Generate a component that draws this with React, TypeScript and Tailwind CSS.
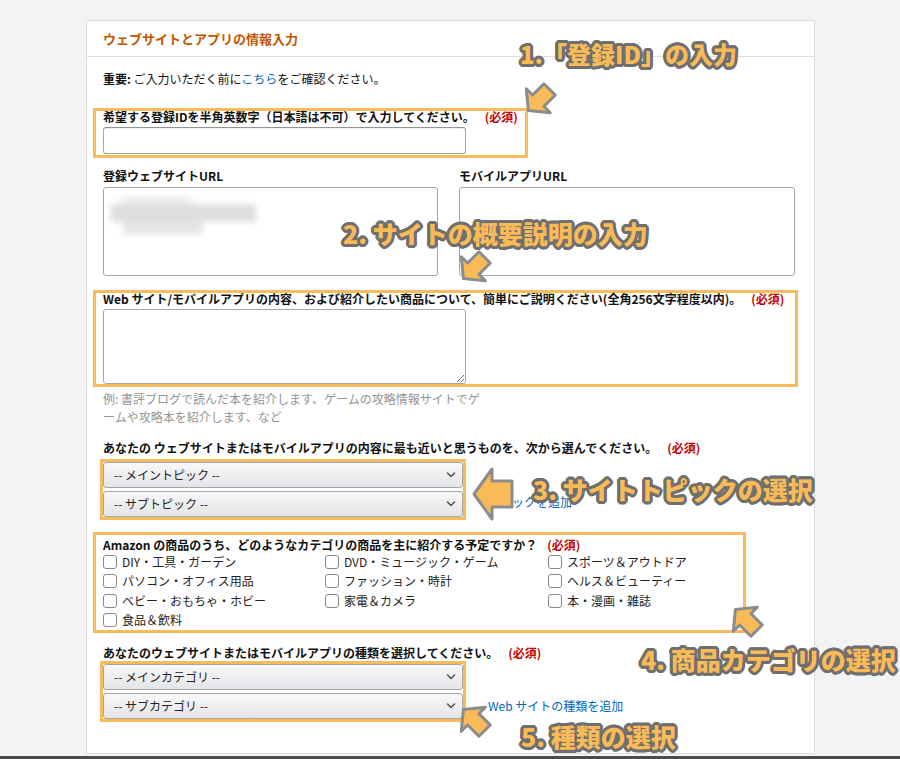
import React from "react";

// Outline used by the big orange annotation labels
const outline =
  "[text-shadow:3px_0_0_#6f6f6f,2.8px_1.1px_0_#6f6f6f,2.1px_2.1px_0_#6f6f6f,1.1px_2.8px_0_#6f6f6f,0_3px_0_#6f6f6f,-1.1px_2.8px_0_#6f6f6f,-2.1px_2.1px_0_#6f6f6f,-2.8px_1.1px_0_#6f6f6f,-3px_0_0_#6f6f6f,-2.8px_-1.1px_0_#6f6f6f,-2.1px_-2.1px_0_#6f6f6f,-1.1px_-2.8px_0_#6f6f6f,0_-3px_0_#6f6f6f,1.1px_-2.8px_0_#6f6f6f,2.1px_-2.1px_0_#6f6f6f,2.8px_-1.1px_0_#6f6f6f]";

function Req() {
  return <span className="ml-[10px] font-bold text-[#c40000]">(必須)</span>;
}

function SelectBox({ label }: { label: string }) {
  return (
    <div className="flex h-[26px] items-center justify-between rounded-[3px] border border-[#a6a6a6] bg-linear-to-b from-[#f8f8f9] to-[#e4e5e8] pl-[10px] pr-[6px] text-[12px] text-[#222]">
      <span>{label}</span>
      <svg width="10" height="8" viewBox="0 0 10 8" fill="none">
        <polyline points="1.5,2 5,5.5 8.5,2" stroke="#555" strokeWidth="1.6" strokeLinecap="round" strokeLinejoin="round" />
      </svg>
    </div>
  );
}

function Check({ label }: { label: string }) {
  return (
    <div className="flex h-[19.5px] items-center gap-[5px]">
      <span className="h-[14px] w-[14px] rounded-[3px] border border-[#8a8a8a] bg-white" />
      <span className="text-[12px] text-[#222]">{label}</span>
    </div>
  );
}

// Orange block arrow pointing left, rotated by the caller
function Arrow({ small }: { small?: boolean }) {
  return small ? (
    <svg width="34" height="40" viewBox="0 0 34 40">
      <polygon points="2,20 16,3 16,12 32,12 32,28 16,28 16,37" fill="#f9bb57" stroke="#8c8c8c" strokeWidth="3" strokeLinejoin="round" />
    </svg>
  ) : (
    <svg width="42" height="54" viewBox="0 0 42 54">
      <polygon points="2,27 20,2 20,14 40,14 40,40 20,40 20,52" fill="#f9bb57" stroke="#8c8c8c" strokeWidth="3" strokeLinejoin="round" />
    </svg>
  );
}

export default function App() {
  const categories = [
    "DIY・工具・ガーデン",
    "DVD・ミュージック・ゲーム",
    "スポーツ＆アウトドア",
    "パソコン・オフィス用品",
    "ファッション・時計",
    "ヘルス＆ビューティー",
    "ベビー・おもちゃ・ホビー",
    "家電＆カメラ",
    "本・漫画・雑誌",
    "食品＆飲料",
  ];

  return (
    <div className="relative flex h-[759px] w-[900px] flex-col overflow-hidden bg-[#f3f3f3] font-['Noto_Sans_CJK_JP',sans-serif] text-[#111]">
      {/* Form card */}
      <div className="ml-[86px] mt-[20px] h-[734px] w-[729px] border border-[#dddddd] bg-white">
        <div className="flex h-[36px] items-center border-b border-[#dddddd] px-[16px] text-[13px] font-bold text-[#c45500]">
          ウェブサイトとアプリの情報入力
        </div>

        <div className="px-[16px]">
          <p className="mt-[13px] text-[12px] leading-[18px]">
            <span className="font-bold">重要:</span> ご入力いただく前に
            <span className="text-[#0066c0]">こちら</span>をご確認ください。
          </p>

          {/* Registration ID */}
          <div className="-ml-[10px] mt-[20px] w-[435px] border-[3px] border-[#f8bb5e] pb-[1px] pl-[7px]">
            <p className="text-[12px] font-bold leading-[12px]">
              希望する登録IDを半角英数字（日本語は不可）で入力してください。
              <Req />
            </p>
            <div className="mt-[4px] h-[27px] w-[363px] rounded-[3px] border border-[#a6a6a6] border-t-[#949494] bg-white shadow-[inset_0_1px_0_rgba(0,0,0,0.07)]" />
          </div>

          {/* URLs */}
          <div className="mt-[11px] flex gap-[21px]">
            <div className="w-[335px]">
              <p className="text-[12px] font-bold leading-[14px]">登録ウェブサイトURL</p>
              <div className="mt-[4px] h-[89px] rounded-[3px] border border-[#a6a6a6] bg-white pl-[7px] pt-[9px]">
                <div className="blur-[3px]">
                  <div className="ml-[10px] h-[7px] w-[70px] bg-[#ececec]" />
                  <div className="h-[18px] w-[145px] bg-[#dedede]" />
                  <div className="ml-[12px] h-[12px] w-[80px] bg-[#e4e4e4]" />
                </div>
              </div>
            </div>
            <div className="w-[336px]">
              <p className="text-[12px] font-bold leading-[14px]">モバイルアプリURL</p>
              <div className="mt-[4px] h-[89px] rounded-[3px] border border-[#a6a6a6] bg-white" />
            </div>
          </div>

          {/* Description */}
          <div className="-ml-[10px] mt-[14px] w-[705px] border-[3px] border-[#f8bb5e] pl-[7px]">
            <p className="whitespace-nowrap text-[12px] font-bold leading-[12px]">
              Web サイト/モバイルアプリの内容、および紹介したい商品について、簡単にご説明ください(全角256文字程度以内)。
              <Req />
            </p>
            <textarea
              readOnly
              className="mt-[4px] block h-[75px] w-[363px] rounded-[3px] border border-[#a6a6a6] bg-white outline-none"
            />
          </div>
          <p className="mt-[3px] whitespace-nowrap text-[12px] leading-[18px] text-[#949494]">
            例: 書評ブログで読んだ本を紹介します、ゲームの攻略情報サイトでゲ
            <br />
            ームや攻略本を紹介します、など
          </p>

          {/* Topic */}
          <p className="mt-[15px] text-[12px] font-bold leading-[14px]">
            あなたの ウェブサイトまたはモバイルアプリの内容に最も近いと思うものを、次から選んでください。
            <Req />
          </p>
          <div className="mt-[4px] flex items-end">
            <div className="-ml-[3px] flex w-[366px] flex-col gap-[3px] border-[3px] border-[#f8bb5e]">
              <SelectBox label="-- メイントピック --" />
              <SelectBox label="-- サブトピック --" />
            </div>
            <span className="mb-[11px] ml-[22px] text-[12px] leading-[14px] text-[#0066c0]">トピックを追加</span>
          </div>

          {/* Categories */}
          <div className="-ml-[10px] mt-[12px] w-[653px] border-[3px] border-[#f8bb5e] pl-[7px] pt-[3px]">
            <p className="text-[12px] font-bold leading-[14px]">
              Amazon の商品のうち、どのようなカテゴリの商品を主に紹介する予定ですか？
              <Req />
            </p>
            <div className="grid grid-cols-[222px_223px_1fr]">
              {categories.map((c) => (
                <Check key={c} label={c} />
              ))}
            </div>
          </div>

          {/* Site type */}
          <p className="mt-[13px] text-[12px] font-bold leading-[14px]">
            あなたのウェブサイトまたはモバイルアプリの種類を選択してください。
            <Req />
          </p>
          <div className="mt-[1px] flex items-end">
            <div className="-ml-[3px] flex w-[366px] flex-col gap-[3px] border-[3px] border-[#f8bb5e]">
              <SelectBox label="-- メインカテゴリ --" />
              <SelectBox label="-- サブカテゴリ --" />
            </div>
            <span className="mb-[9px] ml-[22px] text-[12px] leading-[14px] text-[#0066c0]">Web サイトの種類を追加</span>
          </div>
        </div>
      </div>
      <div className="flex-1" />
      <div className="h-[3px] bg-[#4b4b4b]" />

      {/* Annotation arrows */}
      <div className="absolute left-[522px] top-[80px] rotate-[-45deg]">
        <Arrow small />
      </div>
      <div className="absolute left-[457px] top-[248px] rotate-[-45deg]">
        <Arrow small />
      </div>
      <div className="absolute left-[472px] top-[467px]">
        <Arrow />
      </div>
      <div className="absolute left-[729px] top-[600px] rotate-[45deg]">
        <Arrow small />
      </div>
      <div className="absolute left-[457px] top-[700px] rotate-[45deg]">
        <Arrow small />
      </div>

      {/* Annotation labels */}
      <div className={`absolute left-[520px] top-[42px] whitespace-nowrap text-[24px] font-black leading-none text-[#f9bb57] ${outline}`}>
        1.「登録ID」の入力
      </div>
      <div className={`absolute left-[343px] top-[221px] whitespace-nowrap text-[25px] font-black leading-none text-[#f9bb57] ${outline}`}>
        2. サイトの概要説明の入力
      </div>
      <div className={`absolute left-[533px] top-[477px] whitespace-nowrap text-[25px] font-black leading-none text-[#f9bb57] ${outline}`}>
        3. サイトトピックの選択
      </div>
      <div className={`absolute left-[641px] top-[647px] whitespace-nowrap text-[25px] font-black leading-none text-[#f9bb57] ${outline}`}>
        4. 商品カテゴリの選択
      </div>
      <div className={`absolute left-[521px] top-[724px] whitespace-nowrap text-[25px] font-black leading-none text-[#f9bb57] ${outline}`}>
        5. 種類の選択
      </div>
    </div>
  );
}
